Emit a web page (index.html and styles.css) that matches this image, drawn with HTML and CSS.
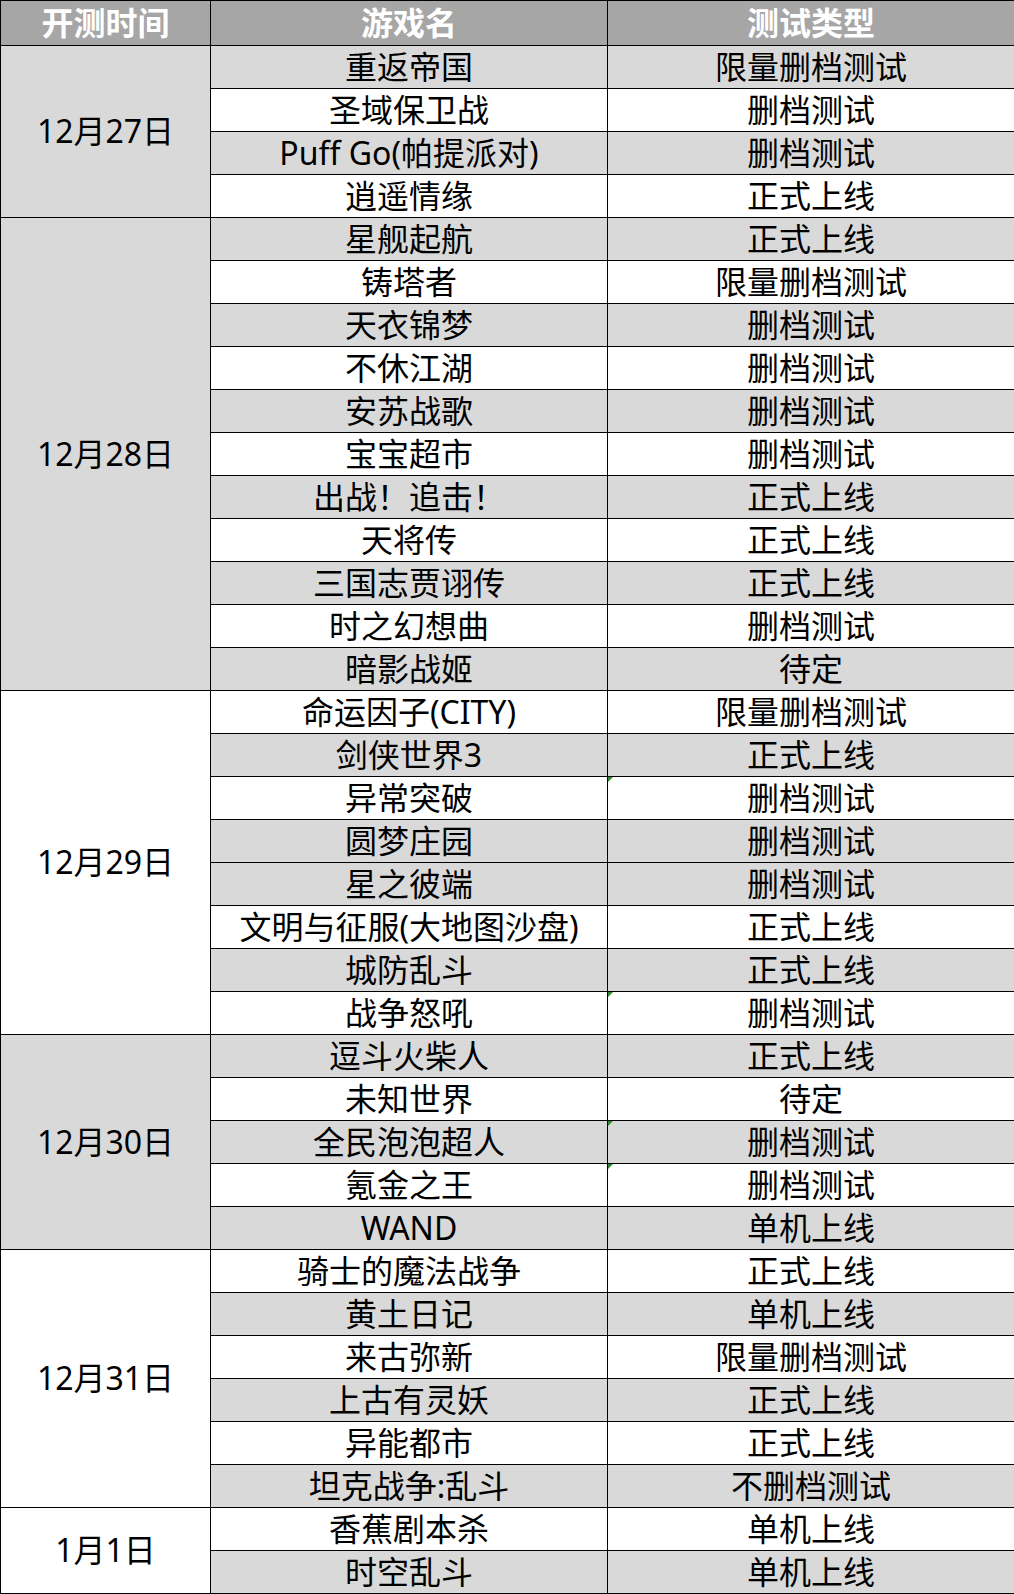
FILE: index.html
```html
<!DOCTYPE html>
<html lang="zh-CN">
<head>
<meta charset="utf-8">
<title>开测表</title>
<link rel="stylesheet" href="styles.css">
</head>
<body>
<table class="schedule">
  <colgroup>
    <col class="c-date">
    <col class="c-name">
    <col class="c-type">
  </colgroup>
  <thead>
    <tr class="head"><th>开测时间</th><th>游戏名</th><th>测试类型</th></tr>
  </thead>
  <tbody>
    <tr class="g"><td class="date g" rowspan="4">12月27日</td><td>重返帝国</td><td>限量删档测试</td></tr>
    <tr><td>圣域保卫战</td><td>删档测试</td></tr>
    <tr class="g"><td>Puff Go(帕提派对)</td><td>删档测试</td></tr>
    <tr><td>逍遥情缘</td><td>正式上线</td></tr>

    <tr class="g"><td class="date g" rowspan="11">12月28日</td><td>星舰起航</td><td>正式上线</td></tr>
    <tr><td>铸塔者</td><td>限量删档测试</td></tr>
    <tr class="g"><td>天衣锦梦</td><td>删档测试</td></tr>
    <tr><td>不休江湖</td><td>删档测试</td></tr>
    <tr class="g"><td>安苏战歌</td><td>删档测试</td></tr>
    <tr><td>宝宝超市</td><td>删档测试</td></tr>
    <tr class="g"><td>出战！追击！</td><td>正式上线</td></tr>
    <tr><td>天将传</td><td>正式上线</td></tr>
    <tr class="g"><td>三国志贾诩传</td><td>正式上线</td></tr>
    <tr><td>时之幻想曲</td><td>删档测试</td></tr>
    <tr class="g"><td>暗影战姬</td><td>待定</td></tr>

    <tr><td class="date w" rowspan="8">12月29日</td><td>命运因子(CITY)</td><td>限量删档测试</td></tr>
    <tr class="g"><td>剑侠世界3</td><td>正式上线</td></tr>
    <tr><td>异常突破</td><td class="flag">删档测试</td></tr>
    <tr class="g"><td>圆梦庄园</td><td>删档测试</td></tr>
    <tr class="g"><td>星之彼端</td><td>删档测试</td></tr>
    <tr><td>文明与征服(大地图沙盘)</td><td>正式上线</td></tr>
    <tr class="g"><td>城防乱斗</td><td>正式上线</td></tr>
    <tr><td>战争怒吼</td><td class="flag">删档测试</td></tr>

    <tr class="g"><td class="date g" rowspan="5">12月30日</td><td>逗斗火柴人</td><td>正式上线</td></tr>
    <tr><td>未知世界</td><td>待定</td></tr>
    <tr class="g"><td>全民泡泡超人</td><td class="flag">删档测试</td></tr>
    <tr><td>氪金之王</td><td class="flag">删档测试</td></tr>
    <tr class="g"><td>WAND</td><td>单机上线</td></tr>

    <tr><td class="date w" rowspan="6">12月31日</td><td>骑士的魔法战争</td><td>正式上线</td></tr>
    <tr class="g"><td>黄土日记</td><td>单机上线</td></tr>
    <tr><td>来古弥新</td><td>限量删档测试</td></tr>
    <tr class="g"><td>上古有灵妖</td><td>正式上线</td></tr>
    <tr><td>异能都市</td><td>正式上线</td></tr>
    <tr class="g"><td>坦克战争:乱斗</td><td>不删档测试</td></tr>

    <tr><td class="date w" rowspan="2">1月1日</td><td>香蕉剧本杀</td><td>单机上线</td></tr>
    <tr class="g"><td>时空乱斗</td><td>单机上线</td></tr>
  </tbody>
</table>
</body>
</html>
```

FILE: styles.css
```css
html, body {
  margin: 0;
  padding: 0;
  background: #ffffff;
}

.schedule {
  border-collapse: collapse;
  table-layout: fixed;
  width: 1014px;
  font-family: "Noto Sans", "Noto Sans CJK SC", sans-serif;
  font-size: 32px;
  color: #000000;
}

.c-date { width: 210px; }
.c-name { width: 397px; }
.c-type { width: 407px; }

.schedule th,
.schedule td {
  border: 1px solid #000000;
  padding: 0 0 1px 0;
  text-align: center;
  vertical-align: middle;
  line-height: 1;
  white-space: nowrap;
  background: #ffffff;
}

.schedule tr {
  height: 43px;
}

.schedule tr.head {
  height: 45px;
}

.schedule th {
  background: #a6a6a6;
  color: #ffffff;
  font-weight: 700;
}

.schedule tr.g td {
  background: #d9d9d9;
}

.schedule td.date.g {
  background: #d9d9d9;
}

.schedule td.date.w,
.schedule tr.g td.date.w {
  background: #ffffff;
}

.schedule td.flag {
  position: relative;
}

.schedule td.flag::before {
  content: "";
  position: absolute;
  left: 0;
  top: 0;
  width: 0;
  height: 0;
  border-top: 5px solid #2f8a2f;
  border-right: 5px solid transparent;
}
```
